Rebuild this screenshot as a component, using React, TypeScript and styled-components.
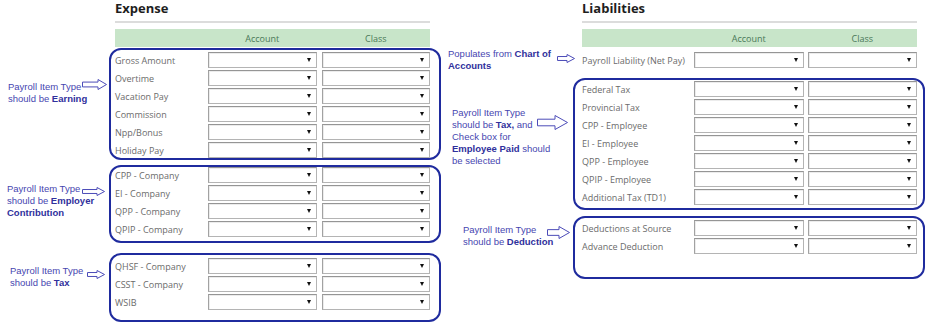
import React from 'react';
import styled, { createGlobalStyle } from 'styled-components';

interface NoteSpec {
    lines: React.ReactNode;
    top: number;
    left: number;
    arrow: { w: number; h: number; dy: number; mr: number };
}

interface GroupSpec {
    rows: string[];
    boxed: boolean;
    mt: number;
    pt: number;
    pb: number;
    note?: NoteSpec;
}

interface SideSpec {
    title: string;
    width: number;
    noteWidth: number;
    boxWidth: number;
    padLeft: number;
    padRight: number;
    labelWidth: number;
    colGap: number;
    contentWidth: number;
    groups: GroupSpec[];
}

const expense: SideSpec = {
    title: 'Expense',
    width: 441,
    noteWidth: 109,
    boxWidth: 332,
    padLeft: 4,
    padRight: 9,
    labelWidth: 88,
    colGap: 5,
    contentWidth: 315,
    groups: [
        {
            rows: ['Gross Amount', 'Overtime', 'Vacation Pay', 'Commission', 'Npp/Bonus', 'Holiday Pay'],
            boxed: true,
            mt: 1,
            pt: 2,
            pb: 0,
            note: {
                lines: (
                    <>
                        Payroll Item Type
                        <br />
                        should be <b>Earning</b>
                    </>
                ),
                top: 33,
                left: 8,
                arrow: { w: 25, h: 11, dy: -2, mr: 2 },
            },
        },
        {
            rows: ['CPP - Company', 'EI - Company', 'QPP - Company', 'QPIP - Company'],
            boxed: true,
            mt: 5,
            pt: 0,
            pb: 4,
            note: {
                lines: (
                    <>
                        Payroll Item Type
                        <br />
                        should be <b>Employer</b>
                        <br />
                        <b>Contribution</b>
                    </>
                ),
                top: 18,
                left: 7,
                arrow: { w: 23, h: 9, dy: 4, mr: 4 },
            },
        },
        {
            rows: ['QHSF - Company', 'CSST - Company', 'WSIB'],
            boxed: true,
            mt: 10,
            pt: 3,
            pb: 10,
            note: {
                lines: (
                    <>
                        Payroll Item Type
                        <br />
                        should be <b>Tax</b>
                    </>
                ),
                top: 12,
                left: 10,
                arrow: { w: 18, h: 9, dy: 5, mr: 4 },
            },
        },
    ],
};

const liabilities: SideSpec = {
    title: 'Liabilities',
    width: 491,
    noteWidth: 132,
    boxWidth: 352,
    padLeft: 7,
    padRight: 6,
    labelWidth: 108,
    colGap: 4,
    contentWidth: 335,
    groups: [
        {
            rows: ['Payroll Liability (Net Pay)'],
            boxed: false,
            mt: 1,
            pt: 2,
            pb: 0,
            note: {
                lines: (
                    <>
                        Populates from <b>Chart of</b>
                        <br />
                        <b>Accounts</b>
                    </>
                ),
                top: -1,
                left: 7,
                arrow: { w: 18, h: 9, dy: 6, mr: -2 },
            },
        },
        {
            rows: [
                'Federal Tax',
                'Provincial Tax',
                'CPP - Employee',
                'EI - Employee',
                'QPP - Employee',
                'QPIP - Employee',
                'Additional Tax (TD1)',
            ],
            boxed: true,
            mt: 6,
            pt: 1,
            pb: 3,
            note: {
                lines: (
                    <>
                        Payroll Item Type
                        <br />
                        should be <b>Tax,</b> and
                        <br />
                        Check box for
                        <br />
                        <b>Employee Paid</b> should
                        <br />
                        be selected
                    </>
                ),
                top: 29,
                left: 11,
                arrow: { w: 31, h: 15, dy: 8, mr: 5 },
            },
        },
        {
            rows: ['Deductions at Source', 'Advance Deduction'],
            boxed: true,
            mt: 6,
            pt: 2,
            pb: 23,
            note: {
                lines: (
                    <>
                        Payroll Item Type
                        <br />
                        should be <b>Deduction</b>
                    </>
                ),
                top: 8,
                left: 22,
                arrow: { w: 23, h: 13, dy: 2, mr: 3 },
            },
        },
    ],
};

function HollowArrow({ w, h }: { w: number; h: number }) {
    const head = Math.round(h * 0.85);
    const hx = w - head;
    const t = h * 0.28;
    const b = h * 0.72;
    return (
        <svg width={w} height={h} viewBox={`0 0 ${w} ${h}`}>
            <path
                d={`M0.5 ${t} L${hx} ${t} L${hx} 0.5 L${w - 0.5} ${h / 2} L${hx} ${h - 0.5} L${hx} ${b} L0.5 ${b} Z`}
                fill="#fff"
                stroke="#4c4cb8"
                strokeWidth={1}
                strokeLinejoin="miter"
            />
        </svg>
    );
}

function Side({ spec }: { spec: SideSpec }) {
    const inset = spec.noteWidth + 2 + spec.padLeft;
    return (
        <Half width={spec.width}>
            <Heading inset={inset} width={spec.contentWidth}>
                <Title>{spec.title}</Title>
                <Rule />
                <HeaderBand labelWidth={spec.labelWidth} colGap={spec.colGap}>
                    <span />
                    <span>Account</span>
                    <span>Class</span>
                </HeaderBand>
            </Heading>
            {spec.groups.map((g, i) => (
                <Group key={i} mt={g.mt}>
                    <Note width={spec.noteWidth} top={g.note ? g.note.top : 0} left={g.note ? g.note.left : 0}>
                        {g.note ? (
                            <>
                                <NoteText>{g.note.lines}</NoteText>
                                <ArrowSlot dy={g.note.arrow.dy} mr={g.note.arrow.mr}>
                                    <HollowArrow w={g.note.arrow.w} h={g.note.arrow.h} />
                                </ArrowSlot>
                            </>
                        ) : null}
                    </Note>
                    <Box
                        width={spec.boxWidth}
                        boxed={g.boxed}
                        pt={g.pt}
                        pb={g.pb}
                        pl={spec.padLeft}
                        pr={spec.padRight}
                    >
                        {g.rows.map(r => (
                            <Row key={r} labelWidth={spec.labelWidth} colGap={spec.colGap}>
                                <Label>{r}</Label>
                                <Dropdown>
                                    <Caret />
                                </Dropdown>
                                <Dropdown>
                                    <Caret />
                                </Dropdown>
                            </Row>
                        ))}
                    </Box>
                </Group>
            ))}
        </Half>
    );
}

export default function App() {
    return (
        <>
            <GlobalStyle />
            <Page>
                <Side spec={expense} />
                <Side spec={liabilities} />
            </Page>
        </>
    );
}

const GlobalStyle = createGlobalStyle`
    html, body {
        margin: 0;
        padding: 0;
        background: #fff;
    }
    body {
        font-family: 'Open Sans', 'Liberation Sans', sans-serif;
    }
`;

const Page = styled.div`
    width: 932px;
    height: 331px;
    display: flex;
    overflow: hidden;
    background: #fff;
`;

const Half = styled.div<{ width: number }>`
    width: ${p => p.width}px;
    flex-shrink: 0;
    display: flex;
    flex-direction: column;
`;

const Heading = styled.div<{ inset: number; width: number }>`
    margin-left: ${p => p.inset}px;
    width: ${p => p.width}px;
    display: flex;
    flex-direction: column;
`;

const Title = styled.div`
    font-size: 13px;
    font-weight: 700;
    line-height: 16px;
    color: #1e1e1e;
    margin-bottom: 5px;
`;

const Rule = styled.div`
    height: 2px;
    background: #dcdcdc;
    margin-bottom: 6px;
`;

const HeaderBand = styled.div<{ labelWidth: number; colGap: number }>`
    height: 18px;
    display: grid;
    grid-template-columns: ${p => p.labelWidth}px 1fr 1fr;
    column-gap: ${p => p.colGap}px;
    align-items: center;
    background: #c8e5c9;
    font-size: 9px;
    color: #4a7858;

    span {
        text-align: center;
    }
`;

const Group = styled.div<{ mt: number }>`
    display: flex;
    margin-top: ${p => p.mt}px;
`;

const Note = styled.div<{ width: number; top: number; left: number }>`
    width: ${p => p.width}px;
    flex-shrink: 0;
    box-sizing: border-box;
    padding-top: ${p => p.top}px;
    padding-left: ${p => p.left}px;
    display: grid;
    align-content: start;

    & > * {
        grid-area: 1 / 1;
    }
`;

const NoteText = styled.div`
    font-family: 'Liberation Sans', Arial, sans-serif;
    font-size: 9.5px;
    line-height: 12px;
    color: #4646b0;
    white-space: nowrap;

    b {
        color: #30309c;
    }
`;

const ArrowSlot = styled.div<{ dy: number; mr: number }>`
    justify-self: end;
    align-self: start;
    margin-top: ${p => p.dy}px;
    margin-right: ${p => p.mr}px;
    line-height: 0;
`;

const Box = styled.div<{ width: number; boxed: boolean; pt: number; pb: number; pl: number; pr: number }>`
    width: ${p => p.width}px;
    flex-shrink: 0;
    box-sizing: border-box;
    border: 2px solid ${p => (p.boxed ? '#1f2b9e' : 'transparent')};
    border-radius: 12px;
    padding: ${p => `${p.pt}px ${p.pr}px ${p.pb}px ${p.pl}px`};
    display: flex;
    flex-direction: column;
    gap: 2px;
`;

const Row = styled.div<{ labelWidth: number; colGap: number }>`
    height: 16px;
    display: grid;
    grid-template-columns: ${p => p.labelWidth}px 1fr 1fr;
    column-gap: ${p => p.colGap}px;
    align-items: center;
`;

const Label = styled.span`
    font-size: 9px;
    color: #6b6b6b;
    white-space: nowrap;
`;

const Dropdown = styled.div`
    height: 16px;
    box-sizing: border-box;
    border: 1px solid #b4b4b4;
    border-top-color: #959595;
    border-left-color: #a2a2a2;
    box-shadow: inset 1px 1px 0 #ececec;
    background: #fff;
    display: flex;
    align-items: center;
    justify-content: flex-end;
    padding-right: 5px;
`;

const Caret = styled.span`
    width: 0;
    height: 0;
    border-left: 2.5px solid transparent;
    border-right: 2.5px solid transparent;
    border-top: 4px solid #111;
`;
